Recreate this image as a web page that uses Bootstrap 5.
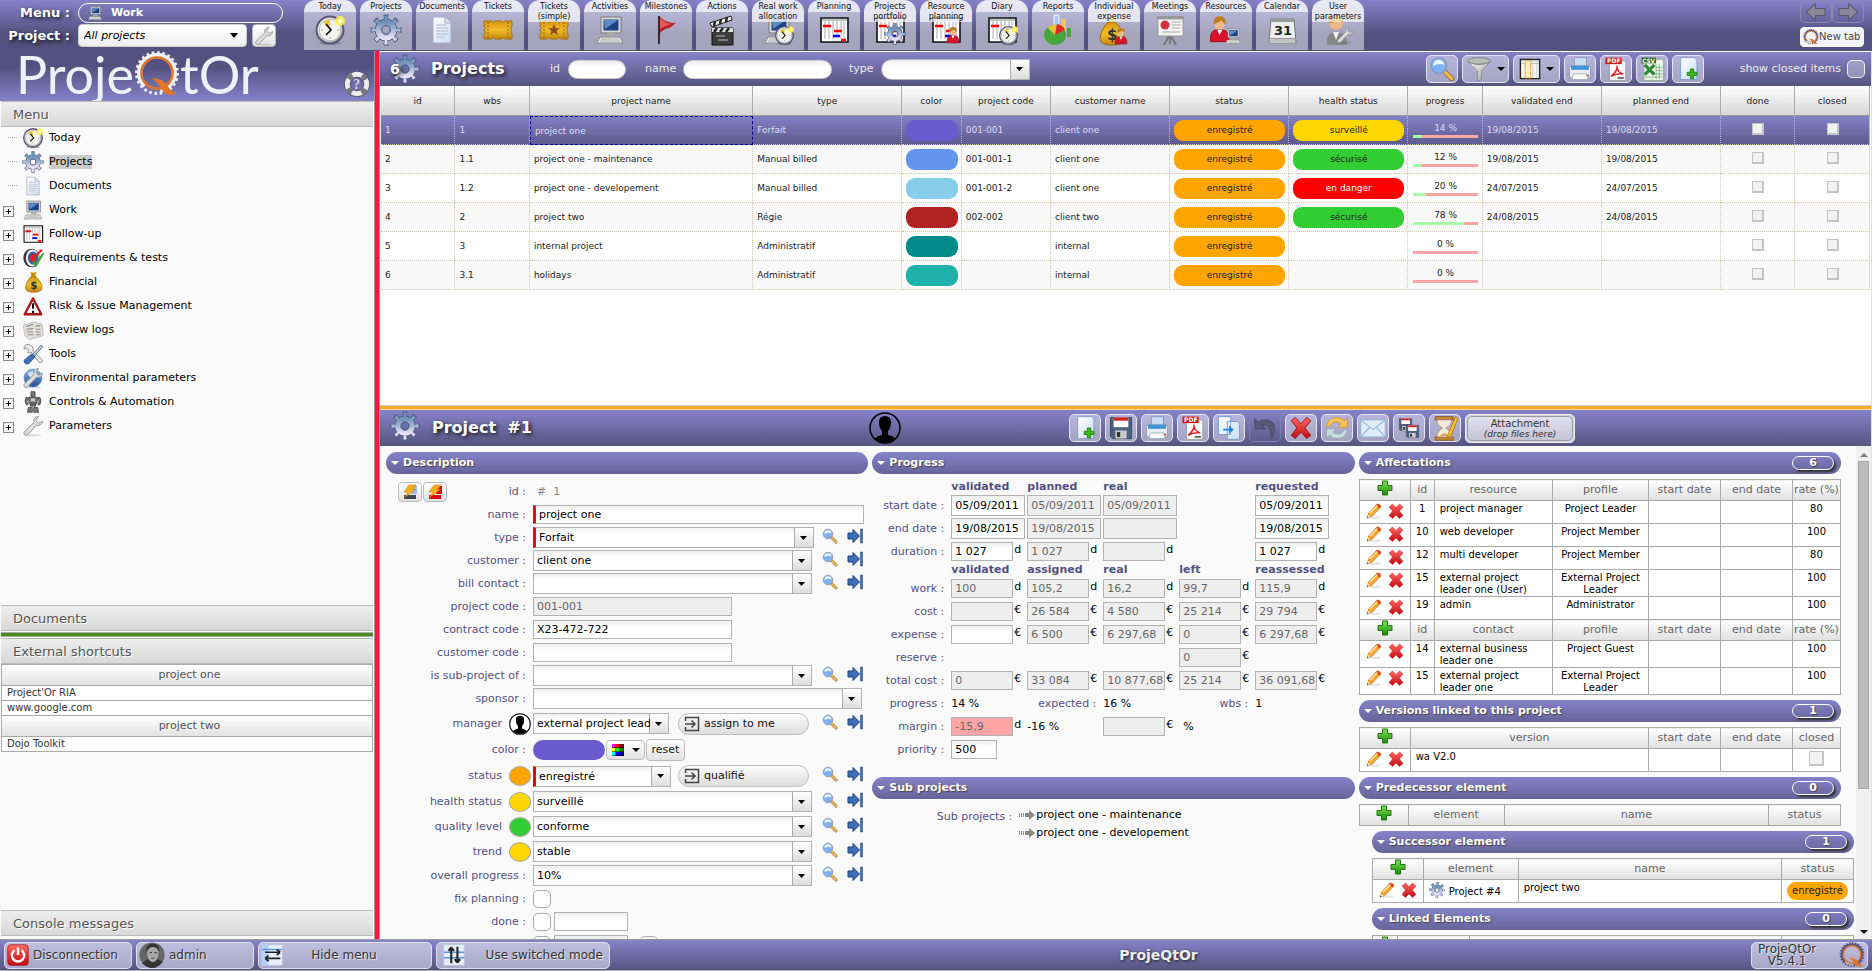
<!DOCTYPE html>
<html lang="en">
<head>
<meta charset="utf-8">
<meta name="viewport" content="width=device-width, initial-scale=1">
<title>ProjeQtOr - Projects</title>
<link href="https://cdn.jsdelivr.net/npm/bootstrap@5.3.0/dist/css/bootstrap.min.css" rel="stylesheet">
<style>
:root{--hi:#8682c9;--lo:#545180;--lab:#545181;--line:#b3b3b3}
body{font-family:"DejaVu Sans",sans-serif;font-size:11px;line-height:14px;color:#000;background:#fff}
a{color:inherit;text-decoration:none}
svg{display:block;flex:none}
.i16{width:16px;height:16px}.i20{width:20px;height:20px}.i22{width:22px;height:22px}.i26{width:26px;height:26px}.i30{width:30px;height:30px}.i32{width:32px;height:32px}
.t9{font-size:9px}.t10{font-size:10px}
.glow{text-shadow:2px 2px 4px #111}
.bartitle{font-size:16px;font-weight:bold;color:#fff;line-height:20px}

/* top bar */
.topbar{height:51px;background:linear-gradient(var(--hi),var(--lo) 34px)}
.selectors{width:304px;flex:none}
.sellab{width:70px;text-align:right;font-size:13px;font-weight:bold;color:#fff}
.menubox{width:205px;height:20px;border:1px solid #fff;border-radius:10px;background:none;color:#fff;font-weight:bold;padding:0 8px}
.projsel{width:169px;height:23px;border:1px solid #ccc;border-radius:4px;font-size:11px;font-style:italic;padding:0 5px;line-height:21px;color:#000;background:url("data:image/svg+xml,%3Csvg xmlns='http://www.w3.org/2000/svg' width='8' height='5'%3E%3Cpath d='M0 0h8L4 5z'/%3E%3C/svg%3E") no-repeat right 8px center,linear-gradient(#fff,#eee)}
.whitebtn{border:1px solid #bbb;border-radius:4px;background:linear-gradient(#fff,#e2e2e2);padding:0;color:#222;display:flex;align-items:center;justify-content:center}
.tabbtn{width:52px;height:50px;border:0;padding:0;border-radius:12px 12px 0 0;background:#ffffff7a;overflow:hidden;font-size:8px;line-height:10px;color:#111;display:flex;flex-direction:column;align-items:center}
.tabbtn span{display:block;width:100%;background:#ffffffa8;white-space:nowrap;position:relative;padding-top:2px}
.tabbtn svg{margin-top:2px}
.tabbtn .two+svg{margin-top:-8px}
.navbtn{width:32px;height:22px;border:1px solid #8d8ab0;border-radius:5px;background:none;padding:0;display:flex;align-items:center;justify-content:center}
.newtab{width:64px;height:20px;border:1px solid #fff;border-radius:4px;background:#f4f4fa;padding:0 2px;color:#444;font-size:10px;white-space:nowrap;overflow:hidden;display:flex;align-items:center}

/* side bar */
.work{min-height:0}
.side{width:375px;border-right:1px solid #999;background:#fafafa;flex:none}
.logo{height:50px;background:linear-gradient(var(--lo) 16px,var(--hi));padding:0 4px 0 16px}
.word{font-family:Lato,sans-serif;font-size:52px;line-height:46px;color:#f0f0f8}
.ptitle{height:26px;line-height:25px;font-size:13px;color:#555;text-shadow:1px 1px 0 #fff;padding-left:12px;background:linear-gradient(#eee,#d8d8d8);border-top:1px solid #bbb;border-bottom:1px solid #bbb;margin:0 1px;flex:none}
.tree li{height:24px;display:flex;align-items:center;padding:0 0 3px 3px}
.exp{width:11px;height:11px;border:1px solid #888;background:#f4f4f4;padding:0;margin-top:3px;position:relative}
.exp:before,.exp:after{content:"";position:absolute;background:#000;left:2px;top:4px;width:5px;height:1px}
.exp:after{left:4px;top:2px;width:1px;height:5px}
.leaf{width:11px}.leaf:before{content:"";display:block;border-top:1px dotted #aaa;margin-left:5px;width:9px}
.tree svg{margin:0 5px 0 8px}
.split-v{width:5px;background:#fa1640;border-right:1px solid #999;flex:none}
.split-h{height:5px;background:#4b8d1c;border-top:1px solid #aaa;border-bottom:1px solid #aaa;margin:1px;flex:none}
.shortcuts{height:272px;flex:none}
.console{margin-bottom:3px}
.links{margin:0 1px;border:1px solid #aaa;border-top:0;color:#333;background:#fff}
.links>*{border-top:1px solid #aaa;height:15px;line-height:14px;font-size:10px;padding-left:5px;display:block}
.links>.grp{height:21px;line-height:20px;font-size:11px;text-align:center;background:linear-gradient(#fff,#e2e2e2);color:#555}

/* bars */
.bar{background:linear-gradient(var(--hi),#57547f);color:#eee;flex:none}
.listbar{height:35px;border-top:1px solid #fff;padding-right:6px}
.tb{width:32px;height:28px;border:1px solid #e4e3f2;border-radius:5px;background:linear-gradient(#b6b4dc,#a6a4c2);padding:0;display:flex;align-items:center;justify-content:center;flex:none}
.tb.wide{width:47px;gap:5px}
.tb.off{background:none;border-color:#817eaa}
.car{width:0;height:0;border:4px solid transparent;border-top-color:#000;border-bottom:0}
.round{height:19px;border:1px solid #ccc;border-radius:10px;background:linear-gradient(#eee,#fff 6px)}
.chk{appearance:none;width:18px;height:18px;border:1px solid #aaa;border-radius:5px;background:#fff;margin:0;flex:none}
.chk.clear{background:#ffffff50;border-color:#eee}
.sq{appearance:none;width:12px;height:12px;border:2px solid #c4c4c4;border-width:1px 2px 2px 1px;background:#f2f2f2;margin:0;display:inline-block}

/* project list */
.listpane{height:319px;flex:none;padding:0 1px}
.plist{table-layout:fixed;font-size:9px;line-height:12px;border-collapse:separate;border-spacing:0;color:#222}
.plist th{height:30px;text-align:center;font-weight:normal;background:linear-gradient(#fff,#d6d6d6);border-right:1px solid #aaa;border-bottom:1px solid #999;padding:0}
.plist td{height:29px;padding:0 3px 0 4px;border-right:1px dotted #d0c8a8;border-bottom:1px dotted #d0c8a8;white-space:nowrap}
.plist tbody tr:nth-child(even){background:#f9f9f9}
.plist .cur td{color:#dddcf0;border-right-color:#b9b6d8}
.plist .cur{background:linear-gradient(#8480c6,#5d5a8c)}
.plist .cur td.foc{border:1px dashed #000090}
.pill{height:21px;border-radius:9px;text-align:center;line-height:21px;color:#222}
.pg{text-align:center;line-height:10px;margin-bottom:2px}
.track{height:3px;background:#ffa5a5;margin:0 1px}.track div{height:3px;background:#a5ffa5}

/* detail */
.split-o{height:5px;background:#f8ac28;border-top:1px solid #ccc;border-bottom:1px solid #f6d9a0;flex:none}
.detbar{height:36px}
.ttl{flex:0 0 489px;padding-left:10px}.who{flex:0 0 200px}
.attach{width:110px;height:29px;border:1px solid #eee;border-radius:5px;padding:1px;background:#d4d3e4}
.attach div{border:1px solid #999;border-radius:5px;height:25px;line-height:10px;color:#333;padding-top:2px;background:linear-gradient(#e2e1ee,#c4c3d4);text-align:center}
.cols{padding:6px 15px 0 6px;gap:4px;background:#fafafa}
.third{flex:1 1 0;min-width:0}
.sect{height:22px;border-radius:11px;background:linear-gradient(var(--hi),#66639a);color:#fff;font-weight:bold;font-size:11px;line-height:22px;padding:0 7px 0 5px;text-shadow:1px 1px 1px #444;display:flex;align-items:center;margin:0;white-space:nowrap}
.sect:before{content:"";border:4px solid transparent;border-top-color:#fff;border-bottom:0;margin-right:4px}
.cnt{margin-left:auto;width:42px;height:14px;border:1px solid #fff;border-radius:7px;line-height:12px;text-align:center;box-shadow:2px 2px 2px #333}
.frow{height:23px;display:flex;align-items:center}
.frow.first{margin-top:6px}
.h25{height:25px}.h26{height:26px}.h27{height:27px}
.lab{width:140px;margin-right:7px;text-align:right;color:var(--lab);flex:none;white-space:nowrap}
.lab.short{width:116px}
.dot{width:22px;height:20px;border:1px solid #aaa;border-radius:50%;margin-right:2px;flex:none}
.fld{height:19px;min-height:0;border:1px solid var(--line);border-radius:0;padding:0 0 0 3px;font-size:11px;line-height:17px;color:#000;background:linear-gradient(#efefef,#fff 6px);flex:none;width:199px}
.fld.ro{background:#eee;color:#666}
.fld.wide{width:331px}
.combo{height:21px;min-height:0;border:1px solid var(--line);border-radius:0;padding:0 18px 0 3px;font-size:11px;line-height:19px;color:#000;flex:none;width:279px;background:url("data:image/svg+xml,%3Csvg xmlns='http://www.w3.org/2000/svg' width='7' height='4'%3E%3Cpath d='M0 0h7L3.500 4z'/%3E%3C/svg%3E") no-repeat right 6px center/7px 4px,linear-gradient(#aaa,#aaa) no-repeat right 18px top/1px 100%,linear-gradient(#fff,#ddd) no-repeat right top/18px 100%,linear-gradient(#efefef,#fff 6px) left top/100% 100%}
.combo.w1{width:136px}.combo.w2{width:329px}
.req{border-left:3px solid #f00}
.combo.req{width:281px}.combo.w1.req{width:138px}
.acts{margin-left:auto;margin-right:5px;margin-bottom:4px;display:flex;gap:9px}.acts button,.bare{border:0;background:none;padding:0}
.assign{width:131px;height:22px;border:1px solid #c0c0c0;border-radius:11px;background:linear-gradient(#fcfcfc,#ddd);padding:0 5px;display:flex;align-items:center;gap:4px;margin-left:9px;color:#111}
.req+.assign{margin-left:7px}
.prow{display:grid;grid-template-columns:79px repeat(5,minmax(0,76px));height:23px;align-items:center}
.prow .pl{color:var(--lab);text-align:right;padding-right:7px;white-space:nowrap}
.prow b{color:var(--lab)}
.prow.hd{height:14px}
.prow.hd.top{margin-top:6px}
.prow .fld{width:62px}.prow .fld.dt{width:74px;height:21px}
.cell{display:flex;gap:1px;align-items:flex-start;line-height:15px}
.atab{table-layout:fixed;width:100%;border-collapse:collapse;font-size:10px;line-height:12px;background:#fff}
.atab th{font-weight:normal;font-size:11px;color:#666;height:21px;text-align:center;background:linear-gradient(#fff,#e0e0e0);border:1px solid #aaa;padding:0;white-space:nowrap;overflow:hidden}
.atab th svg{margin-top:-2px}
.atab td{border:1px solid #aaa;height:23px;padding:2px 2px 0;vertical-align:top;text-align:center}
.atab td.l{text-align:left;padding-left:5px}
.atab .ops{display:flex;gap:6px;justify-content:center}
.stack{display:flex;flex-direction:column;gap:5px}
.shift{margin-left:13px;margin-right:-13px}
.scroller{width:15px;background:#f0f0f0;flex:none;display:flex;flex-direction:column;align-items:center;justify-content:space-between;padding:7px 0 5px}
.thumb{width:11px;height:328px;background:#bcbcbc;border:1px solid #a8a8a8;margin:4px 0 auto}

/* footer */
.foot{height:32px;border-top:1px solid #999;border-bottom:1px solid #aaa}
.fb{height:27px;border:1px solid #e0dff0;border-radius:5px;background:linear-gradient(#c0bedf,#a9a7c8);font-size:12px;color:#333;text-shadow:1px 1px 1px #eee;display:flex;align-items:center;padding:0 2px;flex:none;white-space:nowrap}
.brandname{font-size:14px;text-shadow:1px 1px 3px #222;padding-right:44px}
</style>
</head>
<body class="vh-100 d-flex flex-column overflow-hidden">

<svg width="0" height="0" class="position-absolute" aria-hidden="true">
<defs>
<linearGradient id="gb" x2="0" y2="1"><stop stop-color="#8fb4e6"/><stop offset="1" stop-color="#1d4f9a"/></linearGradient>
<linearGradient id="gg" x2="0" y2="1"><stop stop-color="#6f93b8"/><stop offset="1" stop-color="#e6dff5"/></linearGradient>
<linearGradient id="gy" x2="0" y2="1"><stop stop-color="#d9940f"/><stop offset=".5" stop-color="#f2bd2a"/><stop offset="1" stop-color="#c8880c"/></linearGradient>
<linearGradient id="gs" x2="1" y2="1"><stop stop-color="#fff"/><stop offset="1" stop-color="#999"/></linearGradient>
<linearGradient id="gd" x2="1" y2="1"><stop stop-color="#fff"/><stop offset="1" stop-color="#c9dcf5"/></linearGradient>
<linearGradient id="gr" x2="0" y2="1"><stop stop-color="#ff6a60"/><stop offset="1" stop-color="#c00a12"/></linearGradient>
<linearGradient id="gn" x2="0" y2="1"><stop stop-color="#7fe05a"/><stop offset="1" stop-color="#1c8a0a"/></linearGradient>
<symbol id="clock" viewBox="0 0 32 32"><ellipse cx="16" cy="29" rx="11" ry="2" fill="#0003"/><circle cx="16" cy="16" r="13.500" fill="url(#gs)" stroke="#5c5578" stroke-width="2"/><circle cx="16" cy="16" r="10.800" fill="#f4f4ee" stroke="#bbb"/><path d="M16 16 9 8a10 10 0 0 1 7-2z" fill="#e8c93a"/><path d="m12 10 5 6-5 5" fill="none" stroke="#111" stroke-width="1.600"/><path d="M16 23v2M23 16h2M7 16h2" stroke="#999"/><circle cx="26" cy="7" r="5" fill="#fff04a" opacity=".85"/><circle cx="26" cy="7" r="2.500" fill="#fffbb0"/></symbol>
<symbol id="gear" viewBox="0 0 32 32"><g fill="none"><circle cx="16" cy="16" r="12.500" stroke="#47597e" stroke-width="6" pathLength="16" stroke-dasharray=".9 1.100" stroke-dashoffset=".45"/><circle cx="16" cy="16" r="7.500" stroke="#47597e" stroke-width="7.500"/><circle cx="16" cy="16" r="12.300" stroke="url(#gg)" stroke-width="4.400" pathLength="16" stroke-dasharray=".65 1.350" stroke-dashoffset=".32"/><circle cx="16" cy="16" r="7.500" stroke="url(#gg)" stroke-width="6"/><circle cx="16" cy="16" r="4.500" stroke="#55688e"/></g></symbol>
<symbol id="doc" viewBox="0 0 32 32"><path d="M7 3h12l6 6v20H7z" fill="url(#gd)" stroke="#a9aec0"/><path d="M19 3v6h6" fill="#dfe3ee" stroke="#a9aec0"/><path d="M10 11h11M10 14h12M10 17h12M10 20h12M10 23h9" stroke="#b4b8c8"/></symbol>
<symbol id="pc" viewBox="0 0 32 32"><path d="M7 3h20v16H7z" fill="#d8d8d4" stroke="#777"/><path d="M9.500 5.500h15v11h-15z" fill="#1d4384"/><path d="m10 6 14 0-13 9z" fill="#5e8bc8"/><path d="M13 19h8v3h-8z" fill="#aaa"/><path d="M6 23h20l3 6H3z" fill="#ecece8" stroke="#888"/><path d="M7 25h18M6 27h20" stroke="#aaa"/></symbol>
<symbol id="ticket" viewBox="0 0 32 32"><path d="M2 7h7q2 3 4 0h6q2 3 4 0h7v5q-3 2 0 4-3 2 0 4v5h-7q-2-3-4 0h-6q-2-3-4 0H2v-5q3-2 0-4 3-2 0-4z" fill="url(#gy)" stroke="#a4700c"/><path d="M6 8v16M26 8v16" stroke="#8a5d08" stroke-dasharray="2 1.500"/></symbol>
<symbol id="tstar" viewBox="0 0 32 32"><use href="#ticket"/><path d="m16 10 1.700 4.200h4.300l-3.500 2.600 1.400 4.300-3.900-2.600-3.900 2.600 1.400-4.300-3.500-2.600h4.300z" fill="#8a4a1c"/></symbol>
<symbol id="flag" viewBox="0 0 32 32"><path d="M9 2v28" stroke="#3a2a30" stroke-width="2"/><path d="M10 3q6 6 16 6-5 4-6 5-5 0-10 5z" fill="#b8222c"/><path d="M10 4q5 5 11 6-5 1-11 5z" fill="#e35a5e"/></symbol>
<symbol id="clap" viewBox="0 0 32 32"><path d="M6 14h21v17H6z" fill="#3c3c3c" stroke="#111"/><path d="M6 14h21v4H6z" fill="#ddd"/><path d="m8 18 3-4m3 4 3-4m3 4 3-4" stroke="#222" stroke-width="2.500"/><path d="m4 9 21-7 1 4L6 13z" fill="#eee" stroke="#222"/><path d="m8 12 1-5m5 3 1-5m5 3 1-5" stroke="#222" stroke-width="2.500"/><path d="M10 22h9m-7 4h10" stroke="#bbb"/></symbol>
<symbol id="plan" viewBox="0 0 32 32"><path d="M3 4h27v24H3z" fill="#fff" stroke="#111" stroke-width="1.600"/><path d="M7 7v18m4-18v18m4-18v18m4-18v18m4-18v18m3-18v18" stroke="#aaa"/><path d="M4 6h25" stroke="#888"/><path d="M5 12h8m3 5h8m-1 9h5" stroke="#f00" stroke-width="2.600"/><path d="M15 22h7" stroke="#00f" stroke-width="2.600"/></symbol>
<symbol id="man" viewBox="0 0 32 32"><path d="M4 31q-1-14 8-14h5q10 0 9 14z" fill="#d8142a" stroke="#8e0c18"/><path d="m12 17 3 6 3-6z" fill="#fff"/><path d="M9 9q0-8 6-8t6 8-6 8-6-8z" fill="#eeb98a"/><path d="M8 10q-1-9 7-9t7 9q-3-1-5-4-4 3-9 4z" fill="#c07c22"/></symbol>
<symbol id="rwork" viewBox="0 0 32 32"><use href="#pc"/><use href="#clock" x="12" y="11" width="21" height="21"/></symbol>
<symbol id="pgear" viewBox="0 0 32 32"><use href="#plan"/><use href="#gear" x="10" y="9" width="22" height="22"/></symbol>
<symbol id="pman" viewBox="0 0 32 32"><use href="#plan"/><use href="#man" x="15" y="11" width="17" height="20"/></symbol>
<symbol id="pclock" viewBox="0 0 32 32"><use href="#plan"/><use href="#clock" x="12" y="11" width="21" height="21"/></symbol>
<symbol id="report" viewBox="0 0 32 32"><path d="M12 1h5v16h-5z" fill="#a8c8ee" stroke="#e8f2ff"/><path d="M19 5h5v14h-5z" fill="#f0c860"/><path d="M25 14h4v9h-4z" fill="#46a83a"/><ellipse cx="13" cy="21" rx="11" ry="10" fill="#46a83a"/><path d="m13 21-7-7q5-5 9-3z" fill="#f0c030"/><path d="m13 21 2-11q6 1 8 6z" fill="#dd2a2a"/></symbol>
<symbol id="bag" viewBox="0 0 32 32"><path d="M12 1q4 3 9 0l-2 7h-5z" fill="#c8920e"/><path d="M13 8h7q10 10 9 17-1 6-12 6T5 25Q5 17 13 8z" fill="url(#gy)" stroke="#96690a"/><text x="12" y="26" font-size="15" font-weight="bold" fill="#333">$</text></symbol>
<symbol id="bagman" viewBox="0 0 32 32"><use href="#bag" x="-3"/><use href="#man" x="15" y="13" width="17" height="18"/></symbol>
<symbol id="meet" viewBox="0 0 32 32"><path d="m16 20-6 11m6-11 6 11m-6-9v8" stroke="#777" stroke-width="2"/><path d="M3 2h27v3H3z" fill="#999"/><path d="M4 5h25v17H4z" fill="#f4f4f4" stroke="#999"/><circle cx="11" cy="11" r="4.500" fill="#d8303a"/><path d="M18 8h9m-9 3h9m-9 3h8M8 18h18" stroke="#aaa"/></symbol>
<symbol id="res" viewBox="0 0 32 32"><use href="#man" x="-3" y="0" width="27" height="30"/><use href="#pc" x="14" y="13" width="18" height="18"/></symbol>
<symbol id="cal" viewBox="0 0 32 32"><path d="M5 5h23l2 24H3z" fill="#eee" stroke="#777"/><path d="M5 5h23v3H5zM3 24h27v6H3z" fill="#999"/><path d="M4 26h25m-25 2h25" stroke="#eee"/><text x="8" y="21" font-size="13" font-weight="bold" fill="#222">31</text></symbol>
<symbol id="wrench" viewBox="0 0 32 32"><ellipse cx="16" cy="29.500" rx="12" ry="1.500" fill="#0002"/><path d="M30 9q-1 7-9 6L8 29q-3 2-5-1-1-2 1-4l13-13Q16 3 24 2l-4 6 4 4z" fill="#ddd" stroke="#888" stroke-width="1.200"/></symbol>
<symbol id="upar" viewBox="0 0 32 32"><path d="M5 31q-1-12 7-13h4q10 1 9 13z" fill="#888"/><path d="m11 18 3 8 3-8z" fill="#eee"/><circle cx="14" cy="9" r="7" fill="#eeb98a"/><path d="M7 9Q6 1 14 1t7 8q-3-1-4-3-4 3-10 3z" fill="#d8861c"/><use href="#wrench" x="14" y="11" width="18" height="20"/></symbol>
<symbol id="target" viewBox="0 0 32 32"><ellipse cx="12" cy="16" rx="10" ry="13" fill="#333"/><ellipse cx="15" cy="16" rx="10" ry="13" fill="#eee" stroke="#222"/><ellipse cx="16" cy="16" rx="7.500" ry="9.500" fill="#2a62b8"/><ellipse cx="16" cy="16" rx="4.500" ry="6" fill="#d22"/><path d="m16 21 4 6L31 9" stroke="#32a82e" stroke-width="3" fill="none"/><path d="m17 16 12-12" stroke="#d22" stroke-width="3"/></symbol>
<symbol id="warn" viewBox="0 0 32 32"><path d="M16 5 28 28H4z" fill="#fff" stroke="#a81616" stroke-width="3.500" stroke-linejoin="round"/><path d="M16 12v8m0 3v3" stroke="#111" stroke-width="3"/></symbol>
<symbol id="news" viewBox="0 0 32 32"><path d="M2 9 18 4l3 2 8 1 2 17-20 6-7-6z" fill="#e4e2da" stroke="#aaa"/><path d="m6 11 10-3m4 2 7 0M6 15l10-1m4 1h7M7 19h9m4 0h7M8 23h9m3 0h7" stroke="#888" stroke-width="1.500"/></symbol>
<symbol id="tools" viewBox="0 0 32 32"><path d="M9 2q-6 0-6 7l3-2 4 3-2 4q3 1 5-1l12 15q3 2 4-1l1-2L16 12q2-8-7-10z" fill="#eee" stroke="#666"/><path d="m28 3 2 3-12 13-3-2z" fill="#bcd" stroke="#357"/><path d="m14 16 5 4-9 10q-7 2-7-5z" fill="#3c70b8" stroke="#1c3f78"/></symbol>
<symbol id="globe" viewBox="0 0 32 32"><circle cx="16" cy="16" r="13" fill="url(#gb)" stroke="#5a88c0"/><path d="M8 9q8-6 15 0-5 8-12 5z" fill="#cfe2f8"/><use href="#wrench"/></symbol>
<symbol id="robot" viewBox="0 0 32 32"><path d="M13 1h6v7h-6zM10 9h12v9H10zM6 9q-3 5 0 11h3l-2-5 3-5zM26 9q3 5 0 11h-3l2-5-3-5zM12 19h8v3h-8zM9 24h6v7H8zM17 24h6l1 7h-7z" fill="#777" stroke="#333"/><path d="M13 11h6v4h-6z" fill="#ccc"/></symbol>
<symbol id="mag" viewBox="0 0 32 32"><path d="m19 19 9 9" stroke="#7a6a50" stroke-width="6" stroke-linecap="round"/><path d="m20 20 8 8" stroke="#f6b44a" stroke-width="4" stroke-linecap="round"/><circle cx="12" cy="12" r="9.500" fill="#7db4f0" stroke="#8a9cc0" stroke-width="2"/><path d="M5 12a7 7 0 0 1 14-1q-6-3-14 1z" fill="#e8f4ff"/></symbol>
<symbol id="funnel" viewBox="0 0 32 32"><path d="M2 7q14 7 28 0L19 18v11l-5 2V18z" fill="url(#gs)" stroke="#888"/><ellipse cx="16" cy="6" rx="14" ry="4" fill="#bbb" stroke="#777"/></symbol>
<symbol id="colm" viewBox="0 0 32 32"><path d="M2 2h28v28H2z" fill="#f4f4f4" stroke="#222" stroke-width="2"/><path d="M3 8h26M3 4h26" stroke="#aaa"/><path d="M20 4v25m6-25v25" stroke="#bbb"/><path d="M9 4h8v25H9z" fill="#ffefb8" stroke="#e0962a" stroke-width="1.500" stroke-dasharray="2 1"/></symbol>
<symbol id="print" viewBox="0 0 32 32"><path d="M9 2h15v11H9z" fill="#c8dcf4" stroke="#7a94b8"/><path d="M3 15q0-3 3-3h20q3 0 3 3v12H3z" fill="#e8ecf4" stroke="#8890a0"/><path d="M5 12h22v5H5z" fill="#3f95d8"/><path d="M8 22h16l2 7H6z" fill="#fff" stroke="#9aa"/><circle cx="26" cy="24" r="1.300" fill="#d33"/></symbol>
<symbol id="pdf" viewBox="0 0 32 32"><path d="M8 6h20v24H8z" fill="#fafafa" stroke="#999"/><path d="M3 2h20v8H3z" fill="#cc1616"/><text x="5" y="9" font-size="7.500" font-weight="bold" fill="#fff">PDF</text><path d="M17 12q2 5-7 13 6-4 15-3-8-2-8-10z" fill="none" stroke="#e0201c" stroke-width="1.800"/><path d="M18 27h8" stroke="#555" stroke-width="2"/></symbol>
<symbol id="csv" viewBox="0 0 32 32"><path d="M6 4h24v26H6z" fill="#eef6ea" stroke="#8a8"/><path d="M3 2h18v7H3z" fill="#2a6a2a"/><text x="4" y="8" font-size="7" font-weight="bold" fill="#fff">CSV</text><path d="m7 11 12 12M19 11 7 23" stroke="#2f8a35" stroke-width="4"/><path d="M21 10v18M7 26h22M21 14h8m-8 4h8m-8 4h8M25 10v18" stroke="#7aa87a"/></symbol>
<symbol id="newd" viewBox="0 0 32 32"><path d="M7 2h17l3 3v24H7z" fill="url(#gd)" stroke="#7a98c8"/><path d="M15 20h4v-4h4v4h4v4h-4v4h-4v-4h-4z" fill="#3cb81c" stroke="#1c7a08"/></symbol>
<symbol id="disk" viewBox="0 0 32 32"><path d="M3 3h26v26H6l-3-3z" fill="#4a6280" stroke="#2a3a50"/><path d="M7 3h18v12H7z" fill="#fff"/><path d="M7 3h18v4H7z" fill="#d42020"/><path d="M9 19h14v10H9z" fill="#c8c8c8"/><path d="M11 21h4v6h-4z" fill="#333"/></symbol>
<symbol id="disks" viewBox="0 0 32 32"><use href="#disk" width="22" height="22"/><use href="#disk" x="10" y="10" width="22" height="22"/></symbol>
<symbol id="copy" viewBox="0 0 32 32"><path d="M3 2h15v22H3zM14 8h12l3 3v19H14z" fill="url(#gd)" stroke="#6a94d0"/><path d="M9 17h7v-4l6 5-6 5v-4H9z" fill="#1a86e0"/></symbol>
<symbol id="undo" viewBox="0 0 32 32"><path d="m3 4 1 13h13l-5-4q11-4 12 16 10-19-5-23-7-1-12 3z" fill="#5b5978" stroke="#45435f"/></symbol>
<symbol id="del" viewBox="0 0 32 32"><path d="m4 7 5-4 7 8 7-8 5 4-7 9 7 9-5 4-7-8-7 8-5-4 7-9z" fill="url(#gr)" stroke="#900c10"/></symbol>
<symbol id="sync" viewBox="0 0 32 32"><path d="M3 14Q5 3 16 3q6 0 9 4l4-3v11H17l4-4q-9-6-14 3z" fill="#f6c25a" stroke="#c8922a"/><path d="M29 18Q27 29 16 29q-6 0-9-4l-4 3V17h12l-4 4q9 6 14-3z" fill="#c9d8de" stroke="#8fa3ab"/></symbol>
<symbol id="mail" viewBox="0 0 32 32"><path d="M1 6h30v21H1z" fill="#e2edfb" stroke="#8fb0dc"/><path d="m1 6 15 12L31 6M1 27l11-12m19 12L20 15" fill="none" stroke="#8fb0dc" stroke-width="1.300"/></symbol>
<symbol id="hour" viewBox="0 0 32 32"><path d="M4 2h22v4H4zM4 27h22v4H4z" fill="#c88a32" stroke="#7a4c10"/><path d="M6 6h18q0 7-7 10 7 4 7 11H6q0-7 7-11-7-3-7-10z" fill="#f2ead8" stroke="#a88"/><path d="M9 26q6-7 12 0z" fill="#d8a860"/><path d="m29 2-9 21-1 6 5-5 8-20z" fill="#ffc820" stroke="#a86a0c"/></symbol>
<symbol id="pen" viewBox="0 0 32 32"><path d="M8 29q10 3 20-1" stroke="#0002" stroke-width="3" fill="none"/><path d="m2 30 3-10L21 3q3-2 6 0 4 3 2 6L12 27z" fill="#f7a531" stroke="#b56a14"/><path d="m21 3q3-2 6 0 4 3 2 6l-2 2-8-6z" fill="#d84a28"/><path d="m8 20 15-15" stroke="#ffe0a0" stroke-width="3"/><path d="m2 30 2-7 5 5z" fill="#f5deb8"/><path d="m2 30 1-3 2 2z"/></symbol>
<symbol id="rx" viewBox="0 0 32 32"><path d="m2 8 7-6 7 7 7-7 7 6-7 8 7 9-7 6-7-7-7 7-7-6 7-9z" fill="url(#gr)" stroke="#d0222a"/></symbol>
<symbol id="plus" viewBox="0 0 32 32"><path d="M11 2h10v9h9v10h-9v9H11v-9H2V11h9z" fill="url(#gn)" stroke="#1e7a0c" stroke-width="2"/></symbol>
<symbol id="goto" viewBox="0 0 32 32"><path d="M2 10h10V3l13 13-13 13v-7H2z" fill="#3d6fb2" stroke="#1b3f7c" stroke-width="2"/><path d="M27 2h4v28h-4z" fill="#3d6fb2" stroke="#1b3f7c"/></symbol>
<symbol id="inbox" viewBox="0 0 32 32"><path d="M3 10V3h26v26H3v-7" fill="none" stroke="#444" stroke-width="3"/><path d="M2 16h19M15 9l7 7-7 7" fill="none" stroke="#444" stroke-width="3"/></symbol>
<symbol id="pal" viewBox="0 0 24 24"><path fill="#000" d="M0 0h24v24H0z"/><path fill="#f0f" d="M0 0h7v7H0z"/><path fill="#f00" d="M8 0h7v7H8z"/><path fill="#800" d="M16 0h7v7h-7z"/><path fill="#ff0" d="M0 8h7v7H0z"/><path fill="#0f0" d="M8 8h7v7H8z"/><path fill="#080" d="M16 8h7v7h-7z"/><path fill="#0ff" d="M0 16h7v7H0z"/><path fill="#00f" d="M8 16h7v7H8z"/><path fill="#008" d="M16 16h7v7h-7z"/></symbol>
<symbol id="who" viewBox="0 0 32 32"><circle cx="16" cy="16" r="15" fill="var(--face,none)" stroke="#000" stroke-width="1.500"/><path d="M10 10q0-6 6-6t6 6q0 6-3 9v4q6 1 7 4-10 7-20 0 1-3 7-4v-4q-3-3-3-9z"/></symbol>
<symbol id="buoy" viewBox="0 0 32 32"><circle cx="16" cy="16" r="12" fill="none" stroke="#55536a" stroke-width="8"/><circle cx="16" cy="16" r="12" fill="none" stroke="#ececec" stroke-width="6"/><circle cx="16" cy="16" r="12" fill="none" stroke="#777" stroke-width="6" pathLength="8" stroke-dasharray=".7 1.300" stroke-dashoffset="1.300"/><text x="11.500" y="22" font-family="Liberation Serif" font-size="17" font-weight="bold" fill="#ddd">?</text></symbol>
<symbol id="qlogo" viewBox="0 0 46 46"><circle cx="23" cy="22" r="18" fill="none" stroke="var(--ring,#f0f0f8)" stroke-width="4" pathLength="100" stroke-dasharray="85 15" stroke-dashoffset="-37"/><circle cx="23" cy="22" r="20.500" fill="none" stroke="var(--ring,#f0f0f8)" stroke-width="3" pathLength="48" stroke-dasharray="1 1"/><circle cx="23" cy="22" r="15.500" fill="none" stroke="#e0762c" stroke-width="2.600"/><path d="M18 27q12 0 17 10 3 4 8 5-9 5-15-3-4-7-10-12z" fill="#e0762c"/></symbol>
<symbol id="zap" viewBox="0 0 32 32"><path d="M4 22h24v8H4z" fill="var(--zb,#445)"/><path d="M18 4h12v16H18z" fill="var(--zc,#9bc0f0)"/><path d="m14 2 14 0-7 9 6 0L5 27l7-11H4z" fill="#ffb01c" stroke="#b06a08"/></symbol>
<symbol id="power" viewBox="0 0 32 32"><rect x="1" y="1" width="30" height="30" rx="5" fill="url(#gr)" stroke="#a01010"/><path d="M11 9a9 9 0 1 0 10 0M16 5v11" fill="none" stroke="#fff" stroke-width="3.500"/></symbol>
<symbol id="face" viewBox="0 0 32 32"><circle cx="16" cy="16" r="15.500" fill="#666"/><path d="M4 26q3-4 8-5h9q6 1 8 4-12 14-25 1z" fill="#333"/><path d="M10 12q0-8 7-8t7 8q0 12-7 13-7-1-7-13z" fill="#aaa"/><path d="M9 13q-1-11 8-11t8 10q-3-6-8-6t-8 7z" fill="#333"/><path d="M13 13h3m3 0h3m-7 7h4" stroke="#444" stroke-width="1.500"/></symbol>
<symbol id="hide" viewBox="0 0 32 32"><path d="M1 1h30v30H1z" fill="#e6eefa" stroke="#b8c4e0"/><path d="M1 1h10v30H1z" fill="#b4d0f4"/><path d="M1 8h30" stroke="#5a94e0" stroke-width="2"/><path d="M28 12H6M28 12l-5-4M6 21h22M6 21l5 4M28 12l-5 4M6 21l5-4" fill="none" stroke="#222" stroke-width="2.500"/></symbol>
<symbol id="swt" viewBox="0 0 32 32"><path d="M1 1h30v30H1z" fill="#e6eefa" stroke="#b8c4e0"/><path d="M1 12h30M1 20h30" stroke="#5a94e0" stroke-width="2"/><path d="M12 28V5m0 0L8 10m4-5 4 5M21 4v23m0 0-4-5m4 5 4-5" fill="none" stroke="#222" stroke-width="3"/></symbol>
<symbol id="arr" viewBox="0 0 32 32"><path d="M3 11h14V4l13 12-13 12v-7H3z" fill="#8a8898" stroke="#5c5a70" stroke-width="1.500"/></symbol>
<symbol id="arl" viewBox="0 0 32 32"><path d="M29 11H15V4L2 16l13 12v-7h14z" fill="#8a8898" stroke="#5c5a70" stroke-width="1.500"/></symbol>
<symbol id="sub" viewBox="0 0 16 10"><path d="M0 3h1v4H0zM2 3h1v4H2zM4 3h1v4H4zM6 3h4V0l6 5-6 5V7H6z" fill="#888"/></symbol>
</defs>
</svg>

<header class="topbar d-flex flex-shrink-0">
  <div class="selectors pt-1">
    <div class="d-flex align-items-center" style="height:18px"><span class="sellab glow me-2">Menu :</span><button class="menubox d-flex align-items-center gap-2"><svg class="i16"><use href="#pc"/></svg>Work</button></div>
    <div class="d-flex align-items-center" style="margin-top:2px"><label for="psel" class="sellab glow me-2">Project :</label><select id="psel" class="form-select projsel"><option>All projects</option></select><button class="whitebtn" style="margin-left:5px;width:24px;height:23px" aria-label="Project parameters"><svg class="i20"><use href="#wrench"/></svg></button></div>
  </div>
  <nav class="d-flex gap-1 flex-grow-1">
    <button class="tabbtn"><span>Today</span><svg class="i32"><use href="#clock"/></svg></button>
    <button class="tabbtn"><span>Projects</span><svg class="i32"><use href="#gear"/></svg></button>
    <button class="tabbtn"><span>Documents</span><svg class="i32"><use href="#doc"/></svg></button>
    <button class="tabbtn"><span>Tickets</span><svg class="i32"><use href="#ticket"/></svg></button>
    <button class="tabbtn"><span class="two">Tickets<br>(simple)</span><svg class="i32"><use href="#tstar"/></svg></button>
    <button class="tabbtn"><span>Activities</span><svg class="i32"><use href="#pc"/></svg></button>
    <button class="tabbtn"><span>Milestones</span><svg class="i32"><use href="#flag"/></svg></button>
    <button class="tabbtn"><span>Actions</span><svg class="i32"><use href="#clap"/></svg></button>
    <button class="tabbtn"><span class="two">Real work<br>allocation</span><svg class="i32"><use href="#rwork"/></svg></button>
    <button class="tabbtn"><span>Planning</span><svg class="i32"><use href="#plan"/></svg></button>
    <button class="tabbtn"><span class="two">Projects<br>portfolio</span><svg class="i32"><use href="#pgear"/></svg></button>
    <button class="tabbtn"><span class="two">Resource<br>planning</span><svg class="i32"><use href="#pman"/></svg></button>
    <button class="tabbtn"><span>Diary</span><svg class="i32"><use href="#pclock"/></svg></button>
    <button class="tabbtn"><span>Reports</span><svg class="i32"><use href="#report"/></svg></button>
    <button class="tabbtn"><span class="two">Individual<br>expense</span><svg class="i32"><use href="#bagman"/></svg></button>
    <button class="tabbtn"><span>Meetings</span><svg class="i32"><use href="#meet"/></svg></button>
    <button class="tabbtn"><span>Resources</span><svg class="i32"><use href="#res"/></svg></button>
    <button class="tabbtn"><span>Calendar</span><svg class="i32"><use href="#cal"/></svg></button>
    <button class="tabbtn"><span class="two">User<br>parameters</span><svg class="i32"><use href="#upar"/></svg></button>
  </nav>
  <div class="d-flex flex-column me-2 gap-1" style="padding-top:1px">
    <div class="d-flex"><button class="navbtn" aria-label="Back"><svg class="i22"><use href="#arl"/></svg></button><button class="navbtn" aria-label="Forward"><svg class="i22"><use href="#arr"/></svg></button></div>
    <button class="newtab"><svg class="i16" style="--ring:#57547f"><use href="#qlogo"/></svg>New tab</button>
  </div>
</header>

<main class="work d-flex flex-grow-1">
  <aside class="side d-flex flex-column">
    <div class="logo d-flex justify-content-between flex-shrink-0">
      <div class="d-flex word">Proje<svg width="46" height="46"><use href="#qlogo"/></svg>tOr</div>
      <a href="#" class="align-self-end mb-1" aria-label="Help"><svg class="i26"><use href="#buoy"/></svg></a>
    </div>
    <h2 class="ptitle">Menu</h2>
    <ul class="tree list-unstyled m-0 flex-grow-1">
      <li><span class="leaf"></span><svg class="i22"><use href="#clock"/></svg><a href="#">Today</a></li>
      <li><span class="leaf"></span><svg class="i22"><use href="#gear"/></svg><a href="#" style="background:#ccc">Projects</a></li>
      <li><span class="leaf"></span><svg class="i22"><use href="#doc"/></svg><a href="#">Documents</a></li>
      <li><button class="exp" aria-label="Expand"></button><svg class="i22"><use href="#pc"/></svg><a href="#">Work</a></li>
      <li><button class="exp" aria-label="Expand"></button><svg class="i22"><use href="#plan"/></svg><a href="#">Follow-up</a></li>
      <li><button class="exp" aria-label="Expand"></button><svg class="i22"><use href="#target"/></svg><a href="#">Requirements &amp; tests</a></li>
      <li><button class="exp" aria-label="Expand"></button><svg class="i22"><use href="#bag"/></svg><a href="#">Financial</a></li>
      <li><button class="exp" aria-label="Expand"></button><svg class="i22"><use href="#warn"/></svg><a href="#">Risk &amp; Issue Management</a></li>
      <li><button class="exp" aria-label="Expand"></button><svg class="i22"><use href="#news"/></svg><a href="#">Review logs</a></li>
      <li><button class="exp" aria-label="Expand"></button><svg class="i22"><use href="#tools"/></svg><a href="#">Tools</a></li>
      <li><button class="exp" aria-label="Expand"></button><svg class="i22"><use href="#globe"/></svg><a href="#">Environmental parameters</a></li>
      <li><button class="exp" aria-label="Expand"></button><svg class="i22"><use href="#robot"/></svg><a href="#">Controls &amp; Automation</a></li>
      <li><button class="exp" aria-label="Expand"></button><svg class="i22"><use href="#wrench"/></svg><a href="#">Parameters</a></li>
    </ul>
    <h2 class="ptitle">Documents</h2>
    <div class="split-h"></div>
    <div class="shortcuts">
      <h2 class="ptitle">External shortcuts</h2>
      <div class="links">
        <div class="grp">project one</div><a href="#">Project'Or RIA</a><a href="#">www.google.com</a>
        <div class="grp">project two</div><a href="#">Dojo Toolkit</a>
      </div>
    </div>
    <h2 class="ptitle console">Console messages</h2>
  </aside>
  <div class="split-v"></div>

  <section class="d-flex flex-column flex-grow-1 overflow-hidden border-end">
    <div class="bar listbar d-flex align-items-center">
      <div class="position-relative" style="margin-left:10px"><svg class="i30"><use href="#gear"/></svg><b class="position-absolute top-50 start-0 translate-middle-y text-white glow" style="font-size:14px">6</b></div>
      <span class="bartitle glow" style="width:119px;margin-left:11px">Projects</span>
      <label for="fid" style="width:18px">id</label><input id="fid" class="round" style="width:58px">
      <label for="fname" style="width:38px;margin-left:19px">name</label><input id="fname" class="round" style="width:149px">
      <label for="ftype" style="width:32px;margin-left:17px">type</label><select id="ftype" class="form-select combo rounded-start-pill" style="width:149px"><option></option></select>
      <div class="d-flex gap-1 ms-auto">
        <button class="tb" aria-label="Search"><svg class="i26"><use href="#mag"/></svg></button>
        <button class="tb wide" aria-label="Filter"><svg class="i26"><use href="#funnel"/></svg><span class="car"></span></button>
        <button class="tb wide" aria-label="Columns"><svg class="i22"><use href="#colm"/></svg><span class="car"></span></button>
        <button class="tb" aria-label="Print"><svg class="i26"><use href="#print"/></svg></button>
        <button class="tb" aria-label="PDF"><svg class="i26"><use href="#pdf"/></svg></button>
        <button class="tb" aria-label="CSV"><svg class="i26"><use href="#csv"/></svg></button>
        <button class="tb" aria-label="New"><svg class="i26"><use href="#newd"/></svg></button>
      </div>
      <label for="closed" class="text-nowrap" style="margin-left:36px">show closed items</label><input id="closed" type="checkbox" class="chk clear" style="margin-left:6px">
    </div>
    <div class="listpane">
    <table class="plist w-100">
      <colgroup><col style="width:5%"><col style="width:5%"><col style="width:15%"><col style="width:10%"><col style="width:4%"><col style="width:6%"><col style="width:8%"><col style="width:8%"><col style="width:8%"><col style="width:5%"><col style="width:8%"><col style="width:8%"><col style="width:5%"><col style="width:5%"></colgroup>
      <thead><tr><th>id</th><th>wbs</th><th>project name</th><th>type</th><th>color</th><th>project code</th><th>customer name</th><th>status</th><th>health status</th><th>progress</th><th>validated end</th><th>planned end</th><th>done</th><th>closed</th></tr></thead>
      <tbody>
      <tr class="cur"><td>1</td><td>1</td><td class="foc">project one</td><td>Forfait</td><td><div class="pill" style="background:#6a5acd"></div></td><td>001-001</td><td>client one</td><td><div class="pill" style="background:#ffa500">enregistré</div></td><td><div class="pill" style="background:#ffd700">surveillé</div></td><td><div class="pg">14 %</div><div class="track"><div style="width:14%"></div></div></td><td>19/08/2015</td><td>19/08/2015</td><td class="text-center"><input type="checkbox" class="sq" aria-label="done"></td><td class="text-center"><input type="checkbox" class="sq" aria-label="closed"></td></tr>
      <tr><td>2</td><td>1.1</td><td>project one - maintenance</td><td>Manual billed</td><td><div class="pill" style="background:#6495ed"></div></td><td>001-001-1</td><td>client one</td><td><div class="pill" style="background:#ffa500">enregistré</div></td><td><div class="pill" style="background:#32cd32">sécurisé</div></td><td><div class="pg">12 %</div><div class="track"><div style="width:12%"></div></div></td><td>19/08/2015</td><td>19/08/2015</td><td class="text-center"><input type="checkbox" class="sq" aria-label="done"></td><td class="text-center"><input type="checkbox" class="sq" aria-label="closed"></td></tr>
      <tr><td>3</td><td>1.2</td><td>project one - developement</td><td>Manual billed</td><td><div class="pill" style="background:#87ceeb"></div></td><td>001-001-2</td><td>client one</td><td><div class="pill" style="background:#ffa500">enregistré</div></td><td><div class="pill" style="background:#f00;color:#fff">en danger</div></td><td><div class="pg">20 %</div><div class="track"><div style="width:20%"></div></div></td><td>24/07/2015</td><td>24/07/2015</td><td class="text-center"><input type="checkbox" class="sq" aria-label="done"></td><td class="text-center"><input type="checkbox" class="sq" aria-label="closed"></td></tr>
      <tr><td>4</td><td>2</td><td>project two</td><td>Régie</td><td><div class="pill" style="background:#b22222"></div></td><td>002-002</td><td>client two</td><td><div class="pill" style="background:#ffa500">enregistré</div></td><td><div class="pill" style="background:#32cd32">sécurisé</div></td><td><div class="pg">78 %</div><div class="track"><div style="width:78%"></div></div></td><td>24/08/2015</td><td>24/08/2015</td><td class="text-center"><input type="checkbox" class="sq" aria-label="done"></td><td class="text-center"><input type="checkbox" class="sq" aria-label="closed"></td></tr>
      <tr><td>5</td><td>3</td><td>internal project</td><td>Administratif</td><td><div class="pill" style="background:#008b8b"></div></td><td></td><td>internal</td><td><div class="pill" style="background:#ffa500">enregistré</div></td><td></td><td><div class="pg">0 %</div><div class="track"></div></td><td></td><td></td><td class="text-center"><input type="checkbox" class="sq" aria-label="done"></td><td class="text-center"><input type="checkbox" class="sq" aria-label="closed"></td></tr>
      <tr><td>6</td><td>3.1</td><td>holidays</td><td>Administratif</td><td><div class="pill" style="background:#20b2aa"></div></td><td></td><td>internal</td><td><div class="pill" style="background:#ffa500">enregistré</div></td><td></td><td><div class="pg">0 %</div><div class="track"></div></td><td></td><td></td><td class="text-center"><input type="checkbox" class="sq" aria-label="done"></td><td class="text-center"><input type="checkbox" class="sq" aria-label="closed"></td></tr>
      </tbody>
    </table>
    </div>
    <div class="split-o"></div>
    <div class="bar detbar d-flex align-items-center">
      <div class="ttl d-flex align-items-center"><svg class="i30 me-2 mb-1"><use href="#gear"/></svg><span class="bartitle glow ms-1">Project &nbsp;#1</span></div>
      <div class="who"><svg class="i32"><use href="#who"/></svg></div>
      <div class="d-flex gap-1">
        <button class="tb" aria-label="New"><svg class="i26"><use href="#newd"/></svg></button>
        <button class="tb" aria-label="Save"><svg class="i26"><use href="#disk"/></svg></button>
        <button class="tb" aria-label="Print"><svg class="i26"><use href="#print"/></svg></button>
        <button class="tb" aria-label="PDF"><svg class="i26"><use href="#pdf"/></svg></button>
        <button class="tb" aria-label="Copy"><svg class="i26"><use href="#copy"/></svg></button>
        <button class="tb off" aria-label="Undo"><svg class="i26"><use href="#undo"/></svg></button>
        <button class="tb" aria-label="Delete"><svg class="i26"><use href="#del"/></svg></button>
        <button class="tb" aria-label="Refresh"><svg class="i26"><use href="#sync"/></svg></button>
        <button class="tb" aria-label="Mail"><svg class="i26"><use href="#mail"/></svg></button>
        <button class="tb" aria-label="Multiple update"><svg class="i22"><use href="#disks"/></svg></button>
        <button class="tb" aria-label="History"><svg class="i26"><use href="#hour"/></svg></button>
        <button class="attach"><div><span class="d-block t10">Attachment</span><i class="d-block t9">(drop files here)</i></div></button>
      </div>
    </div>

    <div class="d-flex flex-grow-1 overflow-hidden">
    <div class="cols d-flex flex-grow-1 align-items-start overflow-hidden">
      <div class="third">
        <h3 class="sect">Description</h3>
        <div class="frow first"><button class="whitebtn" style="margin-left:12px;width:24px;height:20px" aria-label="Print"><svg class="i16"><use href="#zap"/></svg></button><button class="whitebtn" style="margin-left:1px;width:24px;height:20px;--zb:#d11;--zc:#d11" aria-label="PDF"><svg class="i16"><use href="#zap"/></svg></button><span class="lab" style="width:79px">id :</span><span class="ms-1" style="color:#888"># &nbsp;1</span></div>
        <div class="frow"><label class="lab" for="d1">name :</label><input id="d1" class="form-control fld wide req" value="project one"></div>
        <div class="frow"><label class="lab" for="d2">type :</label><select id="d2" class="form-select combo req"><option>Forfait</option></select><span class="acts"><button aria-label="Search"><svg class="i16"><use href="#mag"/></svg></button><button aria-label="Go to"><svg class="i16"><use href="#goto"/></svg></button></span></div>
        <div class="frow"><label class="lab" for="d3">customer :</label><select id="d3" class="form-select combo"><option>client one</option></select><span class="acts"><button aria-label="Search"><svg class="i16"><use href="#mag"/></svg></button><button aria-label="Go to"><svg class="i16"><use href="#goto"/></svg></button></span></div>
        <div class="frow"><label class="lab" for="d4">bill contact :</label><select id="d4" class="form-select combo"><option></option></select><span class="acts"><button aria-label="Search"><svg class="i16"><use href="#mag"/></svg></button><button aria-label="Go to"><svg class="i16"><use href="#goto"/></svg></button></span></div>
        <div class="frow"><label class="lab" for="d5">project code :</label><input id="d5" class="form-control fld ro" value="001-001" readonly></div>
        <div class="frow"><label class="lab" for="d6">contract code :</label><input id="d6" class="form-control fld" value="X23-472-722"></div>
        <div class="frow"><label class="lab" for="d7">customer code :</label><input id="d7" class="form-control fld"></div>
        <div class="frow"><label class="lab" for="d8">is sub-project of :</label><select id="d8" class="form-select combo"><option></option></select><span class="acts"><button aria-label="Search"><svg class="i16"><use href="#mag"/></svg></button><button aria-label="Go to"><svg class="i16"><use href="#goto"/></svg></button></span></div>
        <div class="frow"><label class="lab" for="d9">sponsor :</label><select id="d9" class="form-select combo w2"><option></option></select></div>
        <div class="frow h27"><label class="lab short" for="d10">manager</label><svg class="i22" style="margin-right:2px;--face:#fff"><use href="#who"/></svg><select id="d10" class="form-select combo w1"><option>external project leader one</option></select><button class="assign"><svg class="i16"><use href="#inbox"/></svg>assign to me</button><span class="acts"><button aria-label="Search"><svg class="i16"><use href="#mag"/></svg></button><button aria-label="Go to"><svg class="i16"><use href="#goto"/></svg></button></span></div>
        <div class="frow h26"><span class="lab">color :</span><div style="width:72px;height:20px;border-radius:10px;background:#6a5acd"></div><button class="whitebtn gap-2" style="margin-left:1px;width:39px;height:20px" aria-label="Pick a color"><svg width="12" height="12"><use href="#pal"/></svg><span class="car"></span></button><button class="whitebtn" style="margin-left:1px;width:39px;height:22px">reset</button></div>
        <div class="frow h26"><label class="lab short" for="d11">status</label><span class="dot" style="background:#ffa500"></span><select id="d11" class="form-select combo w1 req"><option>enregistré</option></select><button class="assign"><svg class="i16"><use href="#inbox"/></svg>qualifié</button><span class="acts"><button aria-label="Search"><svg class="i16"><use href="#mag"/></svg></button><button aria-label="Go to"><svg class="i16"><use href="#goto"/></svg></button></span></div>
        <div class="frow h25"><label class="lab short" for="d12">health status</label><span class="dot" style="background:#ffd700"></span><select id="d12" class="form-select combo"><option>surveillé</option></select><span class="acts"><button aria-label="Search"><svg class="i16"><use href="#mag"/></svg></button><button aria-label="Go to"><svg class="i16"><use href="#goto"/></svg></button></span></div>
        <div class="frow h25"><label class="lab short" for="d13">quality level</label><span class="dot" style="background:#32cd32"></span><select id="d13" class="form-select combo"><option>conforme</option></select><span class="acts"><button aria-label="Search"><svg class="i16"><use href="#mag"/></svg></button><button aria-label="Go to"><svg class="i16"><use href="#goto"/></svg></button></span></div>
        <div class="frow h25"><label class="lab short" for="d14">trend</label><span class="dot" style="background:#ffd700"></span><select id="d14" class="form-select combo"><option>stable</option></select><span class="acts"><button aria-label="Search"><svg class="i16"><use href="#mag"/></svg></button><button aria-label="Go to"><svg class="i16"><use href="#goto"/></svg></button></span></div>
        <div class="frow"><label class="lab" for="d15">overall progress :</label><select id="d15" class="form-select combo"><option>10%</option></select><span class="acts"><button aria-label="Search"><svg class="i16"><use href="#mag"/></svg></button><button aria-label="Go to"><svg class="i16"><use href="#goto"/></svg></button></span></div>
        <div class="frow"><label class="lab" for="d16">fix planning :</label><input id="d16" type="checkbox" class="chk"></div>
        <div class="frow"><label class="lab" for="d17">done :</label><input id="d17" type="checkbox" class="chk"><input class="form-control fld" style="width:74px;margin-left:3px" aria-label="done date"></div>
        <div class="frow"><span class="lab"></span><input type="checkbox" class="chk" aria-label="closed"><input class="form-control fld ro" style="width:74px;margin-left:3px" aria-label="closed date"><input type="checkbox" class="chk" style="margin-left:12px" aria-label="cancelled"></div>
      </div>

      <div class="third">
        <h3 class="sect">Progress</h3>
        <div class="prow hd top"><span></span><b>validated</b><b>planned</b><b>real</b><span></span><b>requested</b></div>
        <div class="prow"><span class="pl">start date :</span><input class="form-control fld dt" value="05/09/2011" aria-label="start validated"><input class="form-control fld dt ro" value="05/09/2011" aria-label="start planned"><input class="form-control fld dt ro" value="05/09/2011" aria-label="start real"><span></span><input class="form-control fld dt" value="05/09/2011" aria-label="start requested"></div>
        <div class="prow"><span class="pl">end date :</span><input class="form-control fld dt" value="19/08/2015" aria-label="end validated"><input class="form-control fld dt ro" value="19/08/2015" aria-label="end planned"><input class="form-control fld dt ro" aria-label="end real"><span></span><input class="form-control fld dt" value="19/08/2015" aria-label="end requested"></div>
        <div class="prow"><span class="pl">duration :</span><span class="cell"><input class="form-control fld" value="1 027" aria-label="duration validated">d</span><span class="cell"><input class="form-control fld ro" value="1 027" aria-label="duration planned">d</span><span class="cell"><input class="form-control fld ro" aria-label="duration real">d</span><span></span><span class="cell"><input class="form-control fld" value="1 027" aria-label="duration requested">d</span></div>
        <div class="prow hd"><span></span><b>validated</b><b>assigned</b><b>real</b><b>left</b><b>reassessed</b></div>
        <div class="prow"><span class="pl">work :</span><span class="cell"><input class="form-control fld ro" value="100" aria-label="work validated">d</span><span class="cell"><input class="form-control fld ro" value="105,2" aria-label="work assigned">d</span><span class="cell"><input class="form-control fld ro" value="16,2" aria-label="work real">d</span><span class="cell"><input class="form-control fld ro" value="99,7" aria-label="work left">d</span><span class="cell"><input class="form-control fld ro" value="115,9" aria-label="work reassessed">d</span></div>
        <div class="prow"><span class="pl">cost :</span><span class="cell"><input class="form-control fld ro" aria-label="cost validated">€</span><span class="cell"><input class="form-control fld ro" value="26 584" aria-label="cost assigned">€</span><span class="cell"><input class="form-control fld ro" value="4 580" aria-label="cost real">€</span><span class="cell"><input class="form-control fld ro" value="25 214" aria-label="cost left">€</span><span class="cell"><input class="form-control fld ro" value="29 794" aria-label="cost reassessed">€</span></div>
        <div class="prow"><span class="pl">expense :</span><span class="cell"><input class="form-control fld" aria-label="expense validated">€</span><span class="cell"><input class="form-control fld ro" value="6 500" aria-label="expense assigned">€</span><span class="cell"><input class="form-control fld ro" value="6 297,68" aria-label="expense real">€</span><span class="cell"><input class="form-control fld ro" value="0" aria-label="expense left">€</span><span class="cell"><input class="form-control fld ro" value="6 297,68" aria-label="expense reassessed">€</span></div>
        <div class="prow"><span class="pl">reserve :</span><span></span><span></span><span></span><span class="cell"><input class="form-control fld ro" value="0" aria-label="reserve">€</span></div>
        <div class="prow"><span class="pl">total cost :</span><span class="cell"><input class="form-control fld ro" value="0" aria-label="total validated">€</span><span class="cell"><input class="form-control fld ro" value="33 084" aria-label="total assigned">€</span><span class="cell"><input class="form-control fld ro" value="10 877,68" aria-label="total real">€</span><span class="cell"><input class="form-control fld ro" value="25 214" aria-label="total left">€</span><span class="cell"><input class="form-control fld ro" value="36 091,68" aria-label="total reassessed">€</span></div>
        <div class="prow"><span class="pl">progress :</span><span>14 %</span><span class="pl">expected :</span><span>16 %</span><span class="pl">wbs :</span><span>1</span></div>
        <div class="prow"><span class="pl">margin :</span><span class="cell"><input class="form-control fld ro" style="background:#ffa5a5" value="-15,9" aria-label="margin">d</span><span>-16 %</span><span class="cell"><input class="form-control fld ro" aria-label="margin cost">€</span><span class="ps-1">%</span></div>
        <div class="prow"><label class="pl" for="prio">priority :</label><input id="prio" class="form-control fld" style="width:46px" value="500"></div>
        <h3 class="sect mt-3">Sub projects</h3>
        <div class="d-flex" style="margin-top:7px"><span class="lab mt-1">Sub projects :</span><div><div class="d-flex align-items-center" style="height:18px;gap:1px"><svg width="16" height="10"><use href="#sub"/></svg><a href="#">project one - maintenance</a></div><div class="d-flex align-items-center" style="height:18px;gap:1px"><svg width="16" height="10"><use href="#sub"/></svg><a href="#">project one - developement</a></div></div></div>
      </div>

      <div class="third stack">
        <h3 class="sect">Affectations<span class="cnt">6</span></h3>
        <table class="atab">
          <colgroup><col style="width:51px"><col style="width:24px"><col><col style="width:96px"><col style="width:72px"><col style="width:72px"><col style="width:48px"></colgroup>
          <tr><th><button class="bare" aria-label="Add"><svg class="i16"><use href="#plus"/></svg></button></th><th>id</th><th>resource</th><th>profile</th><th>start date</th><th>end date</th><th>rate (%)</th></tr>
          <tr><td><div class="ops"><svg class="i16"><use href="#pen"/></svg><svg class="i16"><use href="#rx"/></svg></div></td><td>1</td><td class="l">project manager</td><td>Project Leader</td><td></td><td></td><td>80</td></tr>
          <tr><td><div class="ops"><svg class="i16"><use href="#pen"/></svg><svg class="i16"><use href="#rx"/></svg></div></td><td>10</td><td class="l">web developer</td><td>Project Member</td><td></td><td></td><td>100</td></tr>
          <tr><td><div class="ops"><svg class="i16"><use href="#pen"/></svg><svg class="i16"><use href="#rx"/></svg></div></td><td>12</td><td class="l">multi developer</td><td>Project Member</td><td></td><td></td><td>80</td></tr>
          <tr><td><div class="ops"><svg class="i16"><use href="#pen"/></svg><svg class="i16"><use href="#rx"/></svg></div></td><td>15</td><td class="l">external project<br>leader one (User)</td><td>External Project<br>Leader</td><td></td><td></td><td>100</td></tr>
          <tr><td><div class="ops"><svg class="i16"><use href="#pen"/></svg><svg class="i16"><use href="#rx"/></svg></div></td><td>19</td><td class="l">admin</td><td>Administrator</td><td></td><td></td><td>100</td></tr>
          <tr><th><button class="bare" aria-label="Add"><svg class="i16"><use href="#plus"/></svg></button></th><th>id</th><th>contact</th><th>profile</th><th>start date</th><th>end date</th><th>rate (%)</th></tr>
          <tr><td><div class="ops"><svg class="i16"><use href="#pen"/></svg><svg class="i16"><use href="#rx"/></svg></div></td><td>14</td><td class="l">external business<br>leader one</td><td>Project Guest</td><td></td><td></td><td>100</td></tr>
          <tr><td><div class="ops"><svg class="i16"><use href="#pen"/></svg><svg class="i16"><use href="#rx"/></svg></div></td><td>15</td><td class="l">external project<br>leader one</td><td>External Project<br>Leader</td><td></td><td></td><td>100</td></tr>
        </table>
        <h3 class="sect">Versions linked to this project<span class="cnt">1</span></h3>
        <table class="atab">
          <colgroup><col style="width:51px"><col><col style="width:72px"><col style="width:72px"><col style="width:48px"></colgroup>
          <tr><th><button class="bare" aria-label="Add"><svg class="i16"><use href="#plus"/></svg></button></th><th>version</th><th>start date</th><th>end date</th><th>closed</th></tr>
          <tr><td><div class="ops"><svg class="i16"><use href="#pen"/></svg><svg class="i16"><use href="#rx"/></svg></div></td><td class="l">wa V2.0</td><td></td><td></td><td><input type="checkbox" class="sq" style="width:15px;height:15px" aria-label="closed"></td></tr>
        </table>
        <h3 class="sect">Predecessor element<span class="cnt">0</span></h3>
        <table class="atab">
          <colgroup><col style="width:49px"><col style="width:96px"><col><col style="width:72px"></colgroup>
          <tr><th><button class="bare" aria-label="Add"><svg class="i16"><use href="#plus"/></svg></button></th><th>element</th><th>name</th><th>status</th></tr>
        </table>
        <div class="shift stack">
        <h3 class="sect">Successor element<span class="cnt">1</span></h3>
        <table class="atab">
          <colgroup><col style="width:51px"><col style="width:95px"><col><col style="width:72px"></colgroup>
          <tr><th><button class="bare" aria-label="Add"><svg class="i16"><use href="#plus"/></svg></button></th><th>element</th><th>name</th><th>status</th></tr>
          <tr><td><div class="ops"><svg class="i16"><use href="#pen"/></svg><svg class="i16"><use href="#rx"/></svg></div></td><td class="l"><div class="d-flex align-items-end gap-1"><svg class="i16"><use href="#gear"/></svg><a href="#">Project #4</a></div></td><td class="l">project two</td><td><div class="pill mx-auto" style="width:61px;height:18px;line-height:17px;background:#ffa500">enregistré</div></td></tr>
        </table>
        <h3 class="sect">Linked Elements<span class="cnt">0</span></h3>
        <table class="atab">
          <colgroup><col style="width:25px"><col style="width:72px"><col><col style="width:72px"></colgroup>
          <tr><th><button class="bare" aria-label="Add"><svg class="i16"><use href="#plus"/></svg></button></th><th></th><th></th><th></th></tr>
        </table>
        </div>
      </div>
    </div>
    <div class="scroller" aria-hidden="true"><span class="car" style="transform:rotate(180deg);opacity:.5"></span><span class="thumb"></span><span class="car"></span></div>
    </div>
  </section>
</main>

<footer class="bar foot d-flex align-items-center gap-1 px-1">
  <button class="fb gap-1" style="width:128px"><svg class="i22"><use href="#power"/></svg>Disconnection</button>
  <button class="fb gap-1" style="width:118px"><svg class="i26"><use href="#face"/></svg>admin</button>
  <button class="fb" style="width:174px"><svg class="i22"><use href="#hide"/></svg><span class="flex-grow-1 pe-4">Hide menu</span></button>
  <button class="fb" style="width:174px"><svg class="i22 ms-1"><use href="#swt"/></svg><span class="flex-grow-1 text-end pe-1">Use switched mode</span></button>
  <b class="brandname mx-auto">ProjeQtOr</b>
  <button class="fb justify-content-between" style="width:117px;line-height:12px"><span class="ms-1">ProjeQtOr<br>V5.4.1</span><svg class="i26" style="--ring:#57547f"><use href="#qlogo"/></svg></button>
</footer>
<script src="https://cdn.jsdelivr.net/npm/bootstrap@5.3.0/dist/js/bootstrap.bundle.min.js"></script>
</body>
</html>
